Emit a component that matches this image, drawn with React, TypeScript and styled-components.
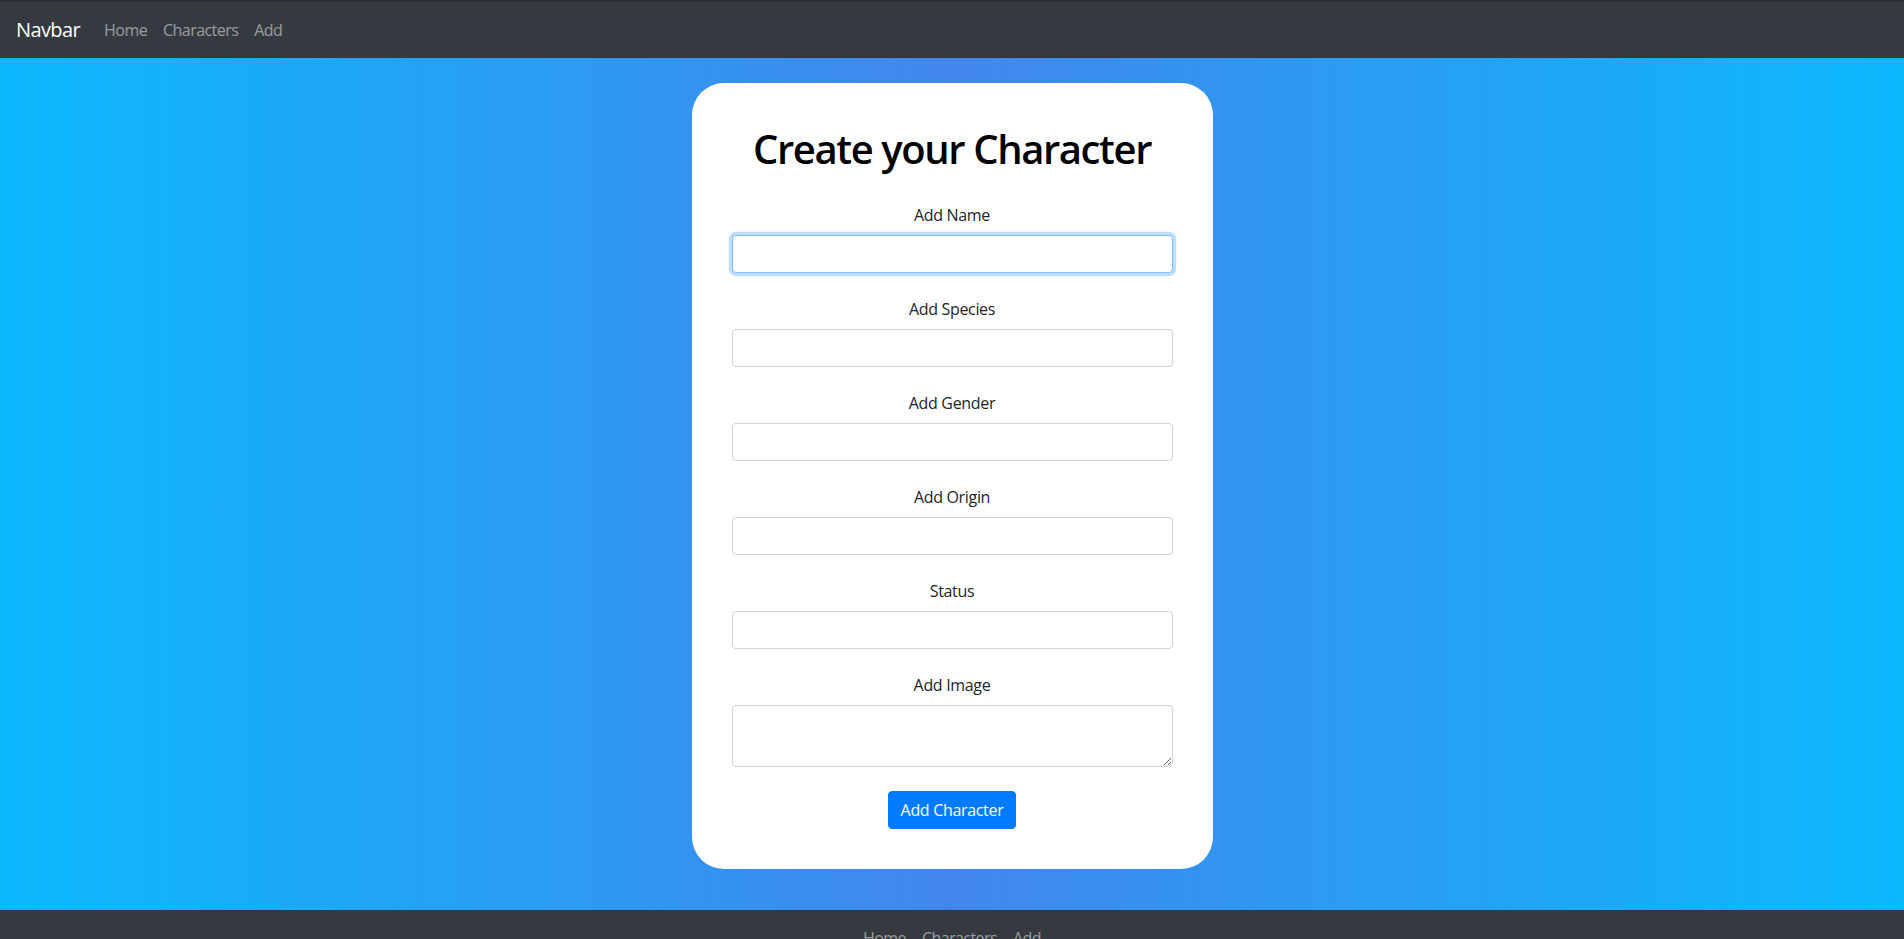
import React from "react";
import styled, { createGlobalStyle } from "styled-components";

const Global = createGlobalStyle`
  *, *::before, *::after { box-sizing: border-box; }
  html, body { margin: 0; padding: 0; }
  body {
    font-family: "Open Sans", "Noto Sans", "Liberation Sans", sans-serif;
    font-size: 16px;
    line-height: 1.5;
    letter-spacing: -0.02em;
    color: #212529;
    background: #343a40;
  }
`;

const Navbar = styled.nav`
  display: flex;
  align-items: center;
  height: 58px;
  padding: 8px 16px;
  background: #343a40;
  border-top: 2px solid #2a2b2d;
`;

const Brand = styled.a`
  font-size: 20px;
  line-height: 30px;
  letter-spacing: -0.03em;
  color: #fff;
  margin-right: 16px;
  text-decoration: none;
`;

const NavList = styled.div<{ $center?: boolean }>`
  display: flex;
  justify-content: ${(p) => (p.$center ? "center" : "flex-start")};
`;

const NavLink = styled.a`
  padding: 0 8px;
  font-size: 16px;
  line-height: 24px;
  letter-spacing: -0.035em;
  color: rgba(255, 255, 255, 0.5);
  text-decoration: none;
`;

const Main = styled.main`
  display: flex;
  justify-content: center;
  padding: 25px 0 41px;
  background: linear-gradient(90deg, #0bb9fd 0%, #4286ec 50%, #0bb9fd 100%);
`;

const Card = styled.form`
  width: 521px;
  padding: 40px;
  background: #fff;
  border-radius: 32px;
  text-align: center;
`;

const Title = styled.h1`
  margin: 0 0 32px;
  padding-top: 2px;
  height: 48px;
  font-size: 40px;
  font-weight: 600;
  line-height: 48px;
  letter-spacing: -0.035em;
  color: #000;
`;

const Group = styled.div`
  margin-bottom: 24px;
`;

const Label = styled.label`
  display: inline-block;
  margin-bottom: 8px;
  font-size: 16px;
  line-height: 24px;
  color: #212529;
`;

const fieldBase = `
  display: block;
  width: 100%;
  padding: 6px 12px;
  font-family: inherit;
  font-size: 16px;
  line-height: 24px;
  color: #495057;
  background: #fff;
  border: 1px solid #ced4da;
  border-radius: 4px;
  outline: none;
`;

const Input = styled.input<{ $focused?: boolean }>`
  ${fieldBase}
  height: 38px;
  border-color: ${(p) => (p.$focused ? "#80bdff" : "#ced4da")};
  box-shadow: ${(p) => (p.$focused ? "0 0 0 3.2px rgba(0,123,255,0.25)" : "none")};
  caret-color: #495057;
`;

const TextArea = styled.textarea`
  ${fieldBase}
  height: 62px;
  resize: vertical;
`;

const Button = styled.button`
  display: inline-block;
  padding: 6px 12px;
  font-family: inherit;
  font-size: 16px;
  line-height: 24px;
  letter-spacing: -0.02em;
  color: #fff;
  background: #007bff;
  border: 1px solid #007bff;
  border-radius: 4px;
  cursor: pointer;
`;

const Footer = styled.footer`
  padding: 16px 0;
  background: #343a40;
`;

const fields = ["Add Species", "Add Gender", "Add Origin", "Status"];

export default function App() {
  return (
    <>
      <Global />
      <Navbar>
        <Brand href="#">Navbar</Brand>
        <NavList>
          <NavLink href="#">Home</NavLink>
          <NavLink href="#">Characters</NavLink>
          <NavLink href="#">Add</NavLink>
        </NavList>
      </Navbar>
      <Main>
        <Card onSubmit={(e) => e.preventDefault()}>
          <Title>Create your Character</Title>
          <Group>
            <Label>Add Name</Label>
            <Input $focused autoFocus />
          </Group>
          {fields.map((f) => (
            <Group key={f}>
              <Label>{f}</Label>
              <Input />
            </Group>
          ))}
          <Group>
            <Label>Add Image</Label>
            <TextArea rows={2} />
          </Group>
          <Button type="submit">Add Character</Button>
        </Card>
      </Main>
      <Footer>
        <NavList $center>
          <NavLink href="#">Home</NavLink>
          <NavLink href="#">Characters</NavLink>
          <NavLink href="#">Add</NavLink>
        </NavList>
      </Footer>
    </>
  );
}
